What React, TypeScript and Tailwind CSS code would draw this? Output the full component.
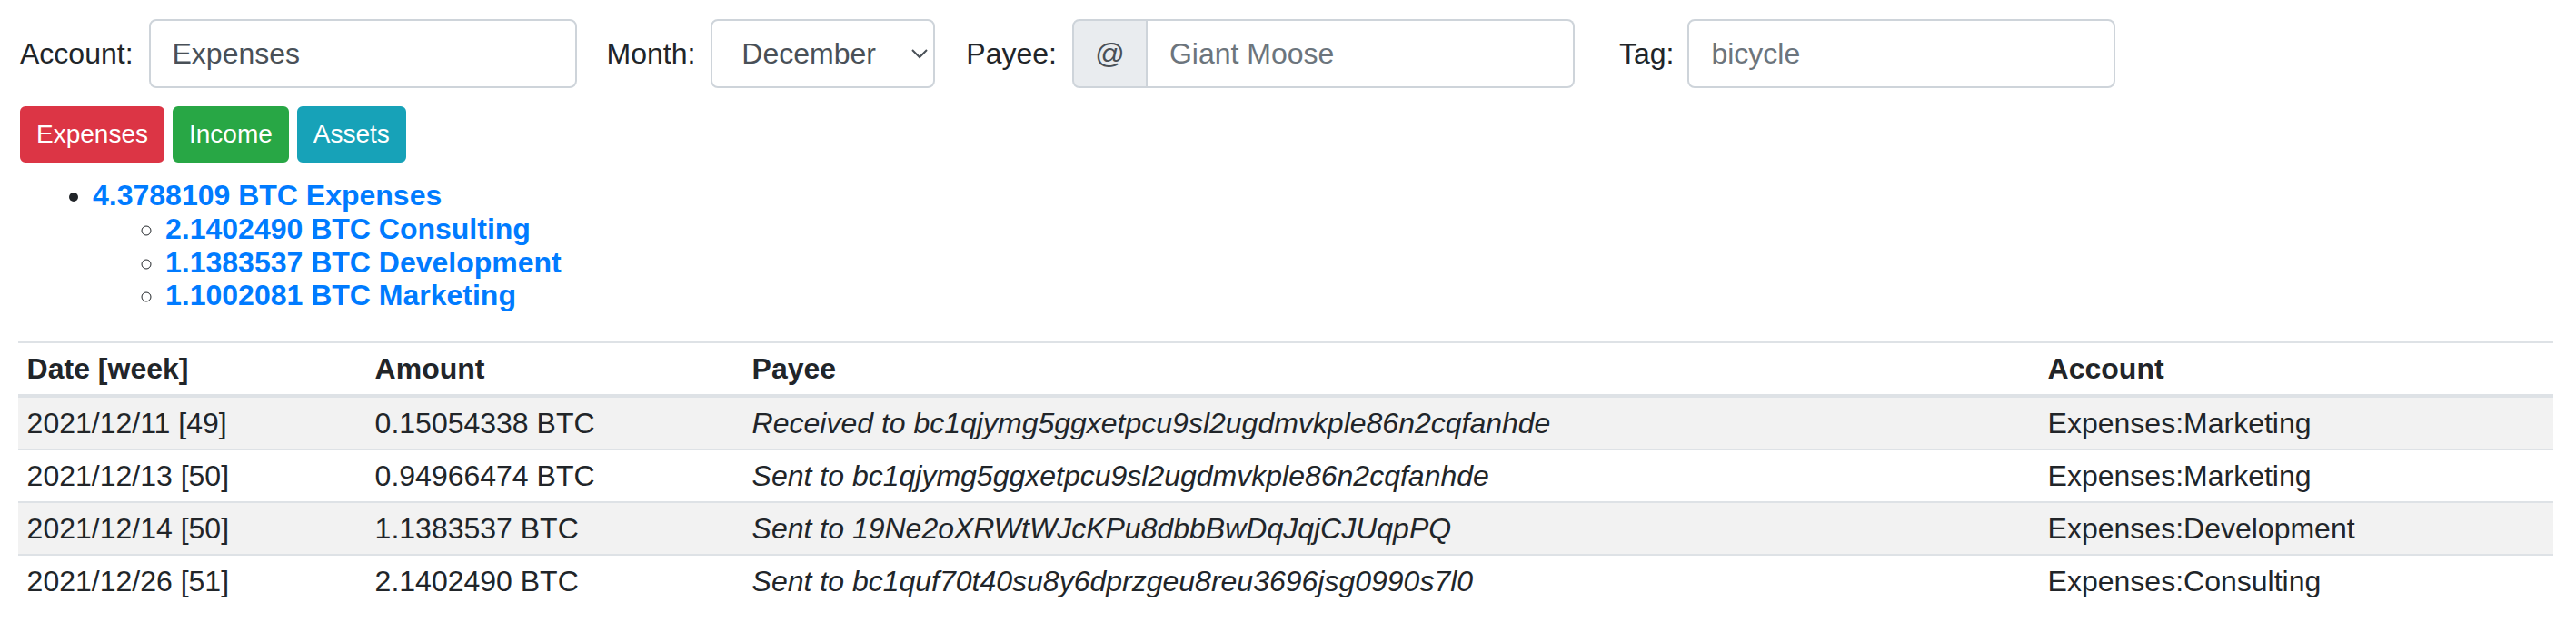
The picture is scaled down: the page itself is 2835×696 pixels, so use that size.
import { FC } from "react";

const subAccounts = [
  { amount: "2.1402490 BTC", name: "Consulting" },
  { amount: "1.1383537 BTC", name: "Development" },
  { amount: "1.1002081 BTC", name: "Marketing" },
];

const rows = [
  {
    date: "2021/12/11 [49]",
    amount: "0.15054338 BTC",
    payee: "Received to bc1qjymg5ggxetpcu9sl2ugdmvkple86n2cqfanhde",
    account: "Expenses:Marketing",
  },
  {
    date: "2021/12/13 [50]",
    amount: "0.94966474 BTC",
    payee: "Sent to bc1qjymg5ggxetpcu9sl2ugdmvkple86n2cqfanhde",
    account: "Expenses:Marketing",
  },
  {
    date: "2021/12/14 [50]",
    amount: "1.1383537 BTC",
    payee: "Sent to 19Ne2oXRWtWJcKPu8dbbBwDqJqjCJUqpPQ",
    account: "Expenses:Development",
  },
  {
    date: "2021/12/26 [51]",
    amount: "2.1402490 BTC",
    payee: "Sent to bc1quf70t40su8y6dprzgeu8reu3696jsg0990s7l0",
    account: "Expenses:Consulting",
  },
];

const inputCls =
  "h-[76px] border-2 border-[#ced4da] bg-white px-[24px] text-[32px] leading-[48px] text-[#495057] placeholder:text-[#6c757d] outline-none";

const App: FC = () => {
  return (
    <div className="min-h-screen bg-white px-[20px] pt-[21px] font-['Liberation_Sans',Arial,sans-serif] text-[32px] leading-[1.15] text-[#212529]">
      {/* Filters */}
      <div className="ml-[2px] flex items-center">
        <label className="mr-[17px]">Account:</label>
        <input
          className={`${inputCls} w-[471px] rounded-[8px]`}
          defaultValue="Expenses"
        />

        <label className="ml-[33px] mr-[17px]">Month:</label>
        <div className="relative">
          <select
            className="h-[76px] w-[247px] appearance-none rounded-[8px] border-2 border-[#ced4da] bg-white pl-[32px] text-[32px] leading-[48px] text-[#495057] outline-none"
            defaultValue="December"
          >
            <option>November</option>
            <option>December</option>
          </select>
          <svg
            className="pointer-events-none absolute right-[8px] top-[32px] h-[12px] w-[18px]"
            viewBox="0 0 18 12"
            fill="none"
          >
            <path d="M1 2l8 8 8-8" stroke="#495057" strokeWidth="2" />
          </svg>
        </div>

        <label className="ml-[34px] mr-[17px]">Payee:</label>
        <div className="flex">
          <span className="flex h-[76px] w-[83px] items-center justify-center rounded-l-[8px] border-2 border-[#ced4da] bg-[#e9ecef] leading-[48px] text-[#495057]">
            @
          </span>
          <input
            className={`${inputCls} w-[470px] rounded-r-[8px] border-l-0`}
            placeholder="Giant Moose"
          />
        </div>

        <label className="ml-[49px] mr-[15px]">Tag:</label>
        <input
          className={`${inputCls} w-[471px] rounded-[8px]`}
          placeholder="bicycle"
        />
      </div>

      {/* Account type buttons */}
      <div className="ml-[2px] mt-[20px] flex gap-[9px]">
        <button className="rounded-[6px] border-2 border-[#dc3545] bg-[#dc3545] px-[16px] py-[8px] text-[28px] leading-[42px] text-white">
          Expenses
        </button>
        <button className="rounded-[6px] border-2 border-[#28a745] bg-[#28a745] px-[16px] py-[8px] text-[28px] leading-[42px] text-white">
          Income
        </button>
        <button className="rounded-[6px] border-2 border-[#17a2b8] bg-[#17a2b8] px-[16px] py-[8px] text-[28px] leading-[42px] text-white">
          Assets
        </button>
      </div>

      {/* Totals */}
      <ul className="mb-[32px] ml-[2px] mt-[18px] list-disc pl-[80px]">
        <li>
          <a href="#" className="font-bold text-[#007bff]">
            4.3788109 BTC Expenses
          </a>
          <ul className="list-[circle] pl-[80px]">
            {subAccounts.map((s) => (
              <li key={s.name}>
                <a href="#" className="font-bold text-[#007bff]">
                  {s.amount} {s.name}
                </a>
              </li>
            ))}
          </ul>
        </li>
      </ul>

      {/* Transactions */}
      <table className="w-[2790px] table-fixed border-collapse">
        <colgroup>
          <col className="w-[383px]" />
          <col className="w-[415px]" />
          <col className="w-[1426px]" />
          <col className="w-[566px]" />
        </colgroup>
        <thead>
          <tr className="border-b-4 border-t-2 border-[#dee2e6]">
            <th className="p-[9.6px] text-left font-bold">Date [week]</th>
            <th className="p-[9.6px] text-left font-bold">Amount</th>
            <th className="p-[9.6px] text-left font-bold">Payee</th>
            <th className="p-[9.6px] text-left font-bold">Account</th>
          </tr>
        </thead>
        <tbody>
          {rows.map((r, i) => (
            <tr
              key={i}
              className={`border-t-2 border-[#dee2e6] ${i % 2 === 0 ? "bg-[#f2f2f2]" : "bg-white"}`}
            >
              <td className="whitespace-nowrap p-[9.6px]">{r.date}</td>
              <td className="whitespace-nowrap p-[9.6px]">{r.amount}</td>
              <td className="whitespace-nowrap p-[9.6px] italic">{r.payee}</td>
              <td className="whitespace-nowrap p-[9.6px]">{r.account}</td>
            </tr>
          ))}
        </tbody>
      </table>
    </div>
  );
};

export default App;
